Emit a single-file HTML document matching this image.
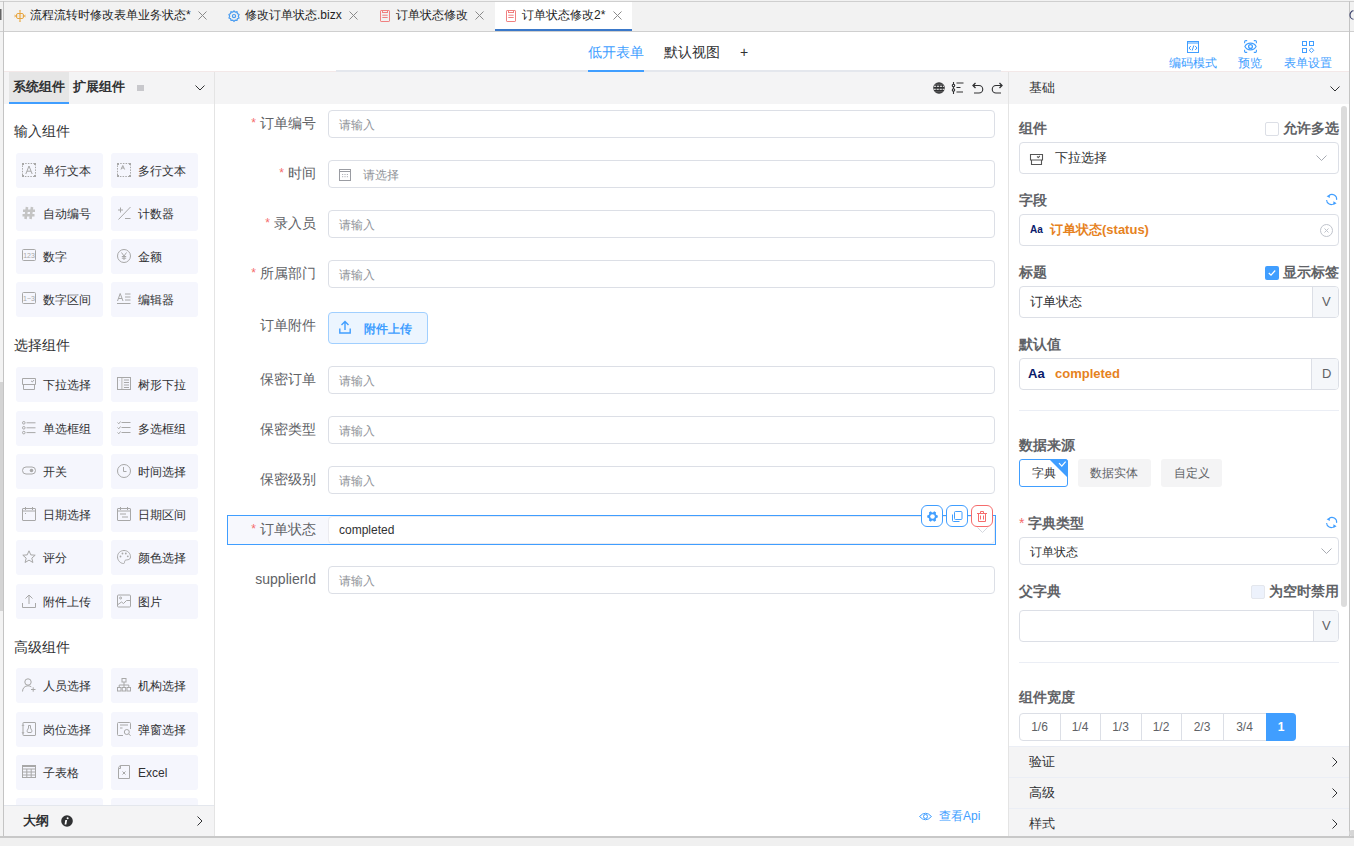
<!DOCTYPE html><html><head><meta charset="utf-8"><style>
*{box-sizing:border-box;margin:0;padding:0}
html,body{width:1354px;height:846px;overflow:hidden;background:#fff;font-family:"Liberation Sans",sans-serif;color:#303133}
.ab{position:absolute}
.t{position:absolute;white-space:nowrap;line-height:20px}
svg{position:absolute;overflow:visible}
.cb{position:absolute;width:87px;height:35px;border-radius:3px;background:#f5f6fd}
.cbt{position:absolute;left:27px;top:8px;font-size:12px;line-height:20px;color:#303133;white-space:nowrap}
.inp{position:absolute;left:328px;width:667px;height:28px;border:1px solid #dcdfe6;border-radius:4px;background:#fff}
.ph{position:absolute;left:10px;top:4px;font-size:12px;line-height:20px;color:#909399;white-space:nowrap}
.lbl{position:absolute;right:1038px;font-size:14px;line-height:20px;color:#606266;white-space:nowrap;text-align:right}
.req{color:#f56c6c;margin-right:4px;font-size:12px;position:relative;top:-1px}
.rb{position:absolute;left:1019px;width:320px;border:1px solid #dcdfe6;border-radius:4px;background:#fff}
.rl{position:absolute;left:1019px;font-size:14px;line-height:20px;font-weight:bold;color:#606266;white-space:nowrap}
</style></head><body>
<div class="ab" style="left:0;top:0;width:1354px;height:32px;background:#f2f2f2"></div>
<div class="ab" style="left:0;top:1px;width:1354px;height:1px;background:#cfcfcf"></div>
<div class="ab" style="left:0;top:31px;width:1354px;height:1px;background:#cfcfcf"></div>
<div class="ab" style="left:0;top:32px;width:3px;height:805px;background:#f3f3f3"></div>
<div class="ab" style="left:0;top:382px;width:3px;height:229px;background:#d4d4d4"></div>
<div class="ab" style="left:0;top:9px;width:1px;height:11px;background:#666"></div><div class="ab" style="left:1px;top:9px;width:1px;height:11px;background:#aaa"></div>
<div class="ab" style="left:3px;top:1px;width:1px;height:836px;background:#c4c4c4"></div>
<div class="ab" style="left:1349px;top:1px;width:1px;height:836px;background:#c4c4c4"></div>
<div class="ab" style="left:0;top:836px;width:1354px;height:1px;background:#c8c8c8"></div>
<div class="ab" style="left:0;top:837px;width:1354px;height:9px;background:#f0f0f0"></div>
<div class="ab" style="left:495px;top:2px;width:137px;height:29px;background:#fff"></div>
<div class="ab" style="left:495px;top:29px;width:137px;height:2px;background:#3a78c9"></div>
<div class="t" style="left:30px;top:5px;font-size:12px;color:#1f1f1f">流程流转时修改表单业务状态*</div>
<svg style="left:198px;top:11px" width="9" height="9" viewBox="0 0 9 9"><path d="M0.5 0.5L8.5 8.5M8.5 0.5L0.5 8.5" stroke="#8a8a8a" stroke-width="1"/></svg>
<div class="t" style="left:245px;top:5px;font-size:12px;color:#1f1f1f">修改订单状态.bizx</div>
<svg style="left:349px;top:11px" width="9" height="9" viewBox="0 0 9 9"><path d="M0.5 0.5L8.5 8.5M8.5 0.5L0.5 8.5" stroke="#8a8a8a" stroke-width="1"/></svg>
<div class="t" style="left:396px;top:5px;font-size:12px;color:#1f1f1f">订单状态修改</div>
<svg style="left:475px;top:11px" width="9" height="9" viewBox="0 0 9 9"><path d="M0.5 0.5L8.5 8.5M8.5 0.5L0.5 8.5" stroke="#8a8a8a" stroke-width="1"/></svg>
<div class="t" style="left:522px;top:5px;font-size:12px;color:#1f1f1f">订单状态修改2*</div>
<svg style="left:613px;top:11px" width="9" height="9" viewBox="0 0 9 9"><path d="M0.5 0.5L8.5 8.5M8.5 0.5L0.5 8.5" stroke="#8a8a8a" stroke-width="1"/></svg>
<svg style="left:14px;top:10px" width="12" height="12" viewBox="0 0 12 12"><g fill="none" stroke="#e8a640" stroke-width="1"><rect x="2.5" y="3.5" width="7" height="5" rx="1.5"/><path d="M6 1V3.5M6 8.5V11M5.2 4.8H6.8M5.2 7.2H6.8M6 4.8V7.2M0.5 5.2L1.8 6L0.5 6.8M11.5 5.2L10.2 6L11.5 6.8M4.2 6H3.6M8.4 6H7.8"/></g><path d="M4.8 0.2H7.2L6 1.6Z M4.8 11.8H7.2L6 10.4Z" fill="#e8a640"/></svg>
<svg style="left:228px;top:10px" width="12" height="12" viewBox="0 0 12 12"><g fill="none" stroke="#4a9cf0" stroke-width="1.2"><path d="M6 0.8L7.2 2.1L9 1.8L9.4 3.6L11 4.5L10.3 6.2L11 7.9L9.4 8.6L9 10.4L7.2 10.1L6 11.4L4.8 10.1L3 10.4L2.6 8.6L1 7.9L1.7 6.2L1 4.5L2.6 3.6L3 1.8L4.8 2.1Z"/><circle cx="6" cy="6.1" r="1.6"/></g></svg>
<svg style="left:380px;top:10px" width="10" height="12" viewBox="0 0 10 12"><g fill="none" stroke="#f08080" stroke-width="1"><rect x="0.5" y="0.5" width="9" height="11" rx="0.6"/><rect x="2.5" y="0.5" width="5" height="2"/><path d="M2.3 5.2H7.7M2.3 7.5H7.7"/></g></svg>
<svg style="left:506px;top:10px" width="10" height="12" viewBox="0 0 10 12"><g fill="none" stroke="#f08080" stroke-width="1"><rect x="0.5" y="0.5" width="9" height="11" rx="0.6"/><rect x="2.5" y="0.5" width="5" height="2"/><path d="M2.3 5.2H7.7M2.3 7.5H7.7"/></g></svg>
<div class="ab" style="left:4px;top:71px;width:1345px;height:1px;background:#f3e8e8"></div>
<div class="ab" style="left:336px;top:70px;width:665px;height:2px;background:#e4e7ed"></div>
<div class="t" style="left:588px;top:42px;font-size:14px;color:#409eff">低开表单</div>
<div class="ab" style="left:588px;top:70px;width:56px;height:2px;background:#409eff"></div>
<div class="t" style="left:664px;top:42px;font-size:14px;color:#303133">默认视图</div>
<div class="t" style="left:740px;top:42px;font-size:14px;color:#303133">+</div>
<div class="t" style="left:1169px;top:53px;font-size:12px;color:#409eff">编码模式</div>
<div class="t" style="left:1238px;top:53px;font-size:12px;color:#409eff">预览</div>
<div class="t" style="left:1284px;top:53px;font-size:12px;color:#409eff">表单设置</div>
<svg style="left:1187px;top:41px" width="12" height="12" viewBox="0 0 12 12"><g fill="none" stroke="#409eff" stroke-width="1"><rect x="0.5" y="0.5" width="11" height="11"/><path d="M0.5 2H11.5M3.8 5L2 7L3.8 9M8.2 5L10 7L8.2 9M6.8 4.5L5.2 9.5"/></g></svg>
<svg style="left:1244px;top:40px" width="13" height="13" viewBox="0 0 13 13"><g fill="none" stroke="#409eff" stroke-width="1.1"><path d="M0.6 3.2V1.8A1.2 1.2 0 0 1 1.8 0.6H3.2M9.8 0.6H11.2A1.2 1.2 0 0 1 12.4 1.8V3.2M12.4 9.8V11.2A1.2 1.2 0 0 1 11.2 12.4H9.8M3.2 12.4H1.8A1.2 1.2 0 0 1 0.6 11.2V9.8"/><path d="M0.9 6.5C3 2 10 2 12.1 6.5C10 11 3 11 0.9 6.5Z"/><circle cx="6.5" cy="6.5" r="1.9" stroke-width="1.3"/></g></svg>
<svg style="left:1302px;top:41px" width="12" height="12" viewBox="0 0 12 12"><g fill="none" stroke="#409eff" stroke-width="1"><rect x="0.5" y="0.5" width="4" height="4"/><rect x="7.5" y="0.5" width="4" height="4"/><rect x="0.5" y="7.5" width="4" height="4"/><path d="M9.5 7L11.8 9.3L9.5 11.6L7.2 9.3Z"/></g></svg>
<div class="ab" style="left:4px;top:72px;width:210px;height:32px;background:#f4f4f5"></div>
<div class="ab" style="left:9px;top:72px;width:60px;height:32px;background:#e6e6e6"></div>
<div class="ab" style="left:9px;top:102px;width:60px;height:2px;background:#409eff"></div>
<div class="ab" style="left:214px;top:72px;width:1px;height:765px;background:#e4e4e4"></div>
<div class="t" style="left:13px;top:77px;font-size:13px;font-weight:bold;color:#303133">系统组件</div>
<div class="t" style="left:73px;top:77px;font-size:13px;font-weight:bold;color:#303133">扩展组件</div>
<div class="ab" style="left:137px;top:85px;width:7px;height:6px;background:#c8c8cc"></div>
<svg style="left:195px;top:85px" width="10" height="6" viewBox="0 0 10 6"><path d="M0.5 0.5L5 5L9.5 0.5" fill="none" stroke="#303133" stroke-width="1"/></svg>
<div class="t" style="left:14px;top:121px;font-size:14px;color:#303133">输入组件</div>
<div class="t" style="left:14px;top:335px;font-size:14px;color:#303133">选择组件</div>
<div class="t" style="left:14px;top:637px;font-size:14px;color:#303133">高级组件</div>
<div class="ab" style="left:4px;top:104px;width:210px;height:701px;overflow:hidden">
<div class="cb" style="left:12px;top:49px"><svg style="left:6px;top:10px" width="14" height="14" viewBox="0 0 14 14"><g fill="none" stroke="#a8a8a8" stroke-width="1" stroke-dasharray="1.5 1.2"><rect x="0.5" y="0.5" width="13" height="13"/></g><g fill="#a8a8a8"><rect x="0" y="0" width="2" height="2"/><rect x="12" y="0" width="2" height="2"/><rect x="0" y="12" width="2" height="2"/><rect x="12" y="12" width="2" height="2"/></g><path d="M3.8 11L7 3L10.2 11M5 8.2H9" fill="none" stroke="#a8a8a8" stroke-width="1" stroke-width="1.1"/></svg><div class="cbt">单行文本</div></div>
<div class="cb" style="left:107px;top:49px"><svg style="left:6px;top:10px" width="14" height="14" viewBox="0 0 14 14"><g fill="none" stroke="#a8a8a8" stroke-width="1" stroke-dasharray="1.5 1.2"><rect x="0.5" y="0.5" width="13" height="13"/></g><g fill="#a8a8a8"><rect x="0" y="0" width="2" height="2"/><rect x="12" y="0" width="2" height="2"/><rect x="0" y="12" width="2" height="2"/><rect x="12" y="12" width="2" height="2"/></g><path d="M4 6.5L5.8 2.5L7.6 6.5M4.7 5H6.9" fill="none" stroke="#a8a8a8" stroke-width="1" stroke-width="0.8"/></svg><div class="cbt">多行文本</div></div>
<div class="cb" style="left:12px;top:92px"><svg style="left:6px;top:10px" width="14" height="14" viewBox="0 0 14 14"><path d="M5 1L3.5 13M10 1L8.5 13M1 4.8H13M0.5 9.2H12.5" fill="none" stroke="#c4c4c4" stroke-width="2.6"/></svg><div class="cbt">自动编号</div></div>
<div class="cb" style="left:107px;top:92px"><svg style="left:6px;top:10px" width="14" height="14" viewBox="0 0 14 14"><path d="M1 4H6M3.5 1.5V6.5M13.5 1L1.5 13.5M8 12.5H13.5" fill="none" stroke="#a8a8a8" stroke-width="1" stroke-width="1.4"/></svg><div class="cbt">计数器</div></div>
<div class="cb" style="left:12px;top:135px"><svg style="left:6px;top:10px" width="14" height="14" viewBox="0 0 14 14"><rect x="0.5" y="0.5" width="13" height="11" rx="1" fill="none" stroke="#a8a8a8" stroke-width="1"/><text x="7" y="9" font-size="7" font-family="Liberation Sans" fill="#a8a8a8" text-anchor="middle">123</text></svg><div class="cbt">数字</div></div>
<div class="cb" style="left:107px;top:135px"><svg style="left:6px;top:10px" width="14" height="14" viewBox="0 0 14 14"><circle cx="7" cy="7" r="6.5" fill="none" stroke="#a8a8a8" stroke-width="1"/><path d="M4.5 3.5L7 7L9.5 3.5M7 7V11M4.8 7.5H9.2M4.8 9.2H9.2" fill="none" stroke="#a8a8a8" stroke-width="1"/></svg><div class="cbt">金额</div></div>
<div class="cb" style="left:12px;top:178px"><svg style="left:6px;top:10px" width="14" height="14" viewBox="0 0 14 14"><rect x="0.5" y="0.5" width="13" height="11" rx="1" fill="none" stroke="#a8a8a8" stroke-width="1"/><text x="7" y="9" font-size="7" font-family="Liberation Sans" fill="#a8a8a8" text-anchor="middle">1~3</text></svg><div class="cbt">数字区间</div></div>
<div class="cb" style="left:107px;top:178px"><svg style="left:6px;top:10px" width="14" height="14" viewBox="0 0 14 14"><path d="M0.5 9L3.2 1.5L6 9M1.5 6.5H5M8 2H13.5M8 5H13.5M8 8H13.5M0 11.5H13.5" fill="none" stroke="#a8a8a8" stroke-width="1"/></svg><div class="cbt">编辑器</div></div>
<div class="cb" style="left:12px;top:263px"><svg style="left:6px;top:10px" width="14" height="14" viewBox="0 0 14 14"><path d="M0.5 7.5V1.5H13.5V7.5ZM1.5 8V12.5H12.5V8M9 3.8L10.3 5L12 3" fill="none" stroke="#a8a8a8" stroke-width="1"/></svg><div class="cbt">下拉选择</div></div>
<div class="cb" style="left:107px;top:263px"><svg style="left:6px;top:10px" width="14" height="14" viewBox="0 0 14 14"><rect x="0.5" y="0.5" width="13" height="12" fill="none" stroke="#a8a8a8" stroke-width="1"/><path d="M5 0.5V12.5M7 3H12M7 5.5H12M7 8H12M7 10.5H12M2.5 3V3.2" fill="none" stroke="#a8a8a8" stroke-width="1"/><rect x="5" y="1" width="1.2" height="11" fill="#ddd"/></svg><div class="cbt">树形下拉</div></div>
<div class="cb" style="left:12px;top:307px"><svg style="left:6px;top:10px" width="14" height="14" viewBox="0 0 14 14"><circle cx="1.8" cy="1.8" r="1.3" fill="none" stroke="#a8a8a8" stroke-width="1"/><circle cx="1.8" cy="6.8" r="1.3" fill="none" stroke="#a8a8a8" stroke-width="1"/><circle cx="1.8" cy="11.6" r="1.3" fill="none" stroke="#a8a8a8" stroke-width="1"/><path d="M4.5 1.8H13.5M4.5 6.8H13.5M4.5 11.6H13.5" fill="none" stroke="#a8a8a8" stroke-width="1" stroke-width="1.2"/></svg><div class="cbt">单选框组</div></div>
<div class="cb" style="left:107px;top:307px"><svg style="left:6px;top:10px" width="14" height="14" viewBox="0 0 14 14"><path d="M0.5 1.5L1.8 2.8L3.5 0.5M0.5 6.5L1.8 7.8L3.5 5.5M0.5 11.5L1.8 12.8L3.5 10.5M4.5 1.5H13.5M4.5 6.5H13.5M4.5 11.5H13.5" fill="none" stroke="#a8a8a8" stroke-width="1" stroke-width="1.1"/></svg><div class="cbt">多选框组</div></div>
<div class="cb" style="left:12px;top:350px"><svg style="left:6px;top:10px" width="14" height="14" viewBox="0 0 14 14"><rect x="0.5" y="3" width="13" height="7" rx="3.5" fill="none" stroke="#a8a8a8" stroke-width="1"/><circle cx="9.5" cy="6.5" r="1.8" fill="#a8a8a8"/></svg><div class="cbt">开关</div></div>
<div class="cb" style="left:107px;top:350px"><svg style="left:6px;top:10px" width="14" height="14" viewBox="0 0 14 14"><circle cx="7" cy="7" r="6.5" fill="none" stroke="#a8a8a8" stroke-width="1"/><path d="M6.5 3V7.5H9.5" fill="none" stroke="#a8a8a8" stroke-width="1"/></svg><div class="cbt">时间选择</div></div>
<div class="cb" style="left:12px;top:393px"><svg style="left:6px;top:10px" width="14" height="14" viewBox="0 0 14 14"><rect x="0.5" y="1.5" width="13" height="12" rx="0.5" fill="none" stroke="#a8a8a8" stroke-width="1"/><path d="M0.5 4H13.5M3.5 0V3M10.5 0V3" fill="none" stroke="#a8a8a8" stroke-width="1"/><rect x="3" y="6" width="1" height="1" fill="#a8a8a8"/></svg><div class="cbt">日期选择</div></div>
<div class="cb" style="left:107px;top:393px"><svg style="left:6px;top:10px" width="14" height="14" viewBox="0 0 14 14"><rect x="0.5" y="1.5" width="13" height="12" rx="0.5" fill="none" stroke="#a8a8a8" stroke-width="1"/><path d="M0.5 4H13.5M3.5 0V3M10.5 0V3M3 7H9M5 10H11" fill="none" stroke="#a8a8a8" stroke-width="1"/></svg><div class="cbt">日期区间</div></div>
<div class="cb" style="left:12px;top:436px"><svg style="left:6px;top:10px" width="14" height="14" viewBox="0 0 14 14"><path d="M7 0.8L8.8 4.9L13.2 5.2L9.8 8.1L10.9 12.5L7 10.1L3.1 12.5L4.2 8.1L0.8 5.2L5.2 4.9Z" fill="none" stroke="#a8a8a8" stroke-width="1"/></svg><div class="cbt">评分</div></div>
<div class="cb" style="left:107px;top:436px"><svg style="left:6px;top:10px" width="14" height="14" viewBox="0 0 14 14"><path d="M7 0.5C3.3 0.5 0.5 3.3 0.5 6.8C0.5 10.5 3.5 13.5 6.5 13.5C8 13.5 7.2 11.5 8 10.5C9 9.3 13.5 10.8 13.5 6.8C13.5 3.3 10.7 0.5 7 0.5Z" fill="none" stroke="#a8a8a8" stroke-width="1"/><g fill="#a8a8a8"><circle cx="3.5" cy="6.5" r="0.9"/><circle cx="5.5" cy="3.5" r="0.9"/><circle cx="8.8" cy="3.5" r="0.9"/><circle cx="10.8" cy="6.3" r="0.9"/></g></svg><div class="cbt">颜色选择</div></div>
<div class="cb" style="left:12px;top:480px"><svg style="left:6px;top:10px" width="14" height="14" viewBox="0 0 14 14"><path d="M7 10V1M3.5 4.5L7 1L10.5 4.5M0.5 9V13.5H13.5V9" fill="none" stroke="#a8a8a8" stroke-width="1" stroke-width="1.2"/></svg><div class="cbt">附件上传</div></div>
<div class="cb" style="left:107px;top:480px"><svg style="left:6px;top:10px" width="14" height="14" viewBox="0 0 14 14"><rect x="0.5" y="1" width="13" height="12" rx="1" fill="none" stroke="#a8a8a8" stroke-width="1"/><circle cx="3.6" cy="4" r="1" fill="none" stroke="#a8a8a8" stroke-width="1"/><path d="M1 10.5L4.5 8L6.5 9.5L9.5 6.5H13.5" fill="none" stroke="#a8a8a8" stroke-width="1"/></svg><div class="cbt">图片</div></div>
<div class="cb" style="left:12px;top:564px"><svg style="left:6px;top:10px" width="14" height="14" viewBox="0 0 14 14"><circle cx="6" cy="4" r="3.2" fill="none" stroke="#a8a8a8" stroke-width="1"/><path d="M0.5 13.5C0.5 10 3 7.8 6 7.8C7.5 7.8 8.5 8.2 9.3 8.8M9 11.5H13.5M11.2 9.3V13.7" fill="none" stroke="#a8a8a8" stroke-width="1"/></svg><div class="cbt">人员选择</div></div>
<div class="cb" style="left:107px;top:564px"><svg style="left:6px;top:10px" width="14" height="14" viewBox="0 0 14 14"><rect x="5" y="0.5" width="4" height="3.5" fill="none" stroke="#a8a8a8" stroke-width="1"/><rect x="0.5" y="9.5" width="3.5" height="3.5" fill="none" stroke="#a8a8a8" stroke-width="1"/><rect x="5.2" y="9.5" width="3.5" height="3.5" fill="none" stroke="#a8a8a8" stroke-width="1"/><rect x="10" y="9.5" width="3.5" height="3.5" fill="none" stroke="#a8a8a8" stroke-width="1"/><path d="M7 4V9.5M2.2 9.5V7H11.8V9.5" fill="none" stroke="#a8a8a8" stroke-width="1"/></svg><div class="cbt">机构选择</div></div>
<div class="cb" style="left:12px;top:608px"><svg style="left:6px;top:10px" width="14" height="14" viewBox="0 0 14 14"><path d="M1 2.5V1A0.5 0.5 0 0 1 1.5 0.5H13A0.5 0.5 0 0 1 13.5 1V13A0.5 0.5 0 0 1 13 13.5H1.5A0.5 0.5 0 0 1 1 13V11M0 4L1 2.5L2 4M0 10L1 11.5L2 10M1 4V10" fill="none" stroke="#a8a8a8" stroke-width="1"/><path d="M6.5 3.5H8.5V6L9.8 8.5A1.5 1.5 0 0 1 9 10.5H6A1.5 1.5 0 0 1 5.2 8.5L6.5 6Z" fill="none" stroke="#a8a8a8" stroke-width="1"/></svg><div class="cbt">岗位选择</div></div>
<div class="cb" style="left:107px;top:608px"><svg style="left:6px;top:10px" width="14" height="14" viewBox="0 0 14 14"><path d="M13.5 7V1.5A1 1 0 0 0 12.5 0.5H1.5A1 1 0 0 0 0.5 1.5V12.5A1 1 0 0 0 1.5 13.5H6M3 3H11M3 6H5.5" fill="none" stroke="#a8a8a8" stroke-width="1"/><circle cx="9.8" cy="10" r="2.5" fill="none" stroke="#a8a8a8" stroke-width="1"/><path d="M11.6 11.8L13.6 13.8" fill="none" stroke="#a8a8a8" stroke-width="1"/></svg><div class="cbt">弹窗选择</div></div>
<div class="cb" style="left:12px;top:651px"><svg style="left:6px;top:10px" width="14" height="14" viewBox="0 0 14 14"><rect x="0.5" y="0.5" width="13" height="12" fill="none" stroke="#a8a8a8" stroke-width="1"/><path d="M0.5 4H13.5M0.5 7H13.5M0.5 10H13.5M4.8 4V12.5M9.2 4V12.5M0.5 1.5H13.5" fill="none" stroke="#a8a8a8" stroke-width="1"/></svg><div class="cbt">子表格</div></div>
<div class="cb" style="left:107px;top:651px"><svg style="left:6px;top:10px" width="14" height="14" viewBox="0 0 14 14"><path d="M4 0.5H12.5V13.5H1.5V3.5M1.5 3.5C1.5 2 2.5 0.5 4 0.5M1.5 3.5H3.5V0.8" fill="none" stroke="#a8a8a8" stroke-width="1"/><path d="M5.5 6.5L8.5 9.5M8.5 6.5L5.5 9.5" fill="none" stroke="#a8a8a8" stroke-width="1"/></svg><div class="cbt">Excel</div></div>
<div class="cb" style="left:12px;top:694px"><div class="cbt"></div></div>
<div class="cb" style="left:107px;top:694px"><div class="cbt"></div></div>
</div>
<div class="ab" style="left:4px;top:805px;width:210px;height:31px;background:#f4f4f5;border-top:1px solid #e4e7ed"></div>
<div class="t" style="left:23px;top:811px;font-size:13px;font-weight:bold;color:#303133">大纲</div>
<svg style="left:61px;top:815px" width="12" height="12" viewBox="0 0 12 12"><circle cx="6" cy="6" r="5.8" fill="#303133"/><rect x="5.2" y="5" width="1.8" height="4.5" fill="#fff" transform="skewX(-10)"/><circle cx="6.6" cy="3.2" r="1" fill="#fff"/></svg>
<svg style="left:197px;top:816px" width="6" height="10" viewBox="0 0 6 10"><path d="M0.5 0.5L5 5L0.5 9.5" fill="none" stroke="#303133" stroke-width="1"/></svg>
<div class="ab" style="left:215px;top:72px;width:793px;height:32px;background:#f4f4f5"></div>
<div class="ab" style="left:1008px;top:72px;width:1px;height:765px;background:#e4e4e4"></div>
<div class="inp" style="top:110px"><div class="ph" style="left:10px">请输入</div></div>
<div class="t" style="left:0;width:316px;text-align:right;top:113px;font-size:14px;color:#606266"><span class="req">*</span>订单编号</div>
<div class="inp" style="top:160px"><div class="ph" style="left:34px">请选择</div></div>
<svg style="left:339px;top:169px" width="12" height="12" viewBox="0 0 12 12"><g fill="none" stroke="#9a9ca2" stroke-width="1"><rect x="0.5" y="0.5" width="11" height="11"/><path d="M0.5 2.5H11.5"/></g><g fill="#b0b2b8"><rect x="3" y="5" width="1.2" height="1"/><rect x="5.4" y="5" width="1.2" height="1"/><rect x="7.8" y="5" width="1.2" height="1"/><rect x="3" y="7.2" width="1.2" height="1"/><rect x="5.4" y="7.2" width="1.2" height="1"/><rect x="7.8" y="7.2" width="1.2" height="1"/></g></svg>
<div class="t" style="left:0;width:316px;text-align:right;top:163px;font-size:14px;color:#606266"><span class="req">*</span>时间</div>
<div class="inp" style="top:210px"><div class="ph" style="left:10px">请输入</div></div>
<div class="t" style="left:0;width:316px;text-align:right;top:213px;font-size:14px;color:#606266"><span class="req">*</span>录入员</div>
<div class="inp" style="top:260px"><div class="ph" style="left:10px">请输入</div></div>
<div class="t" style="left:0;width:316px;text-align:right;top:263px;font-size:14px;color:#606266"><span class="req">*</span>所属部门</div>
<div class="ab" style="left:328px;top:312px;width:100px;height:32px;border:1px solid #a0cfff;border-radius:4px;background:#ecf5ff"><div class="t" style="left:35px;top:6px;font-size:12px;font-weight:bold;color:#409eff">附件上传</div></div>
<svg style="left:339px;top:320px" width="12" height="14" viewBox="0 0 12 14"><g fill="none" stroke="#409eff" stroke-width="1.4"><path d="M6 10V1.5M2.5 5L6 1.5L9.5 5M0.8 8.5V13H11.2V8.5"/></g></svg>
<div class="t" style="left:0;width:316px;text-align:right;top:315px;font-size:14px;color:#606266">订单附件</div>
<div class="inp" style="top:366px"><div class="ph" style="left:10px">请输入</div></div>
<div class="t" style="left:0;width:316px;text-align:right;top:369px;font-size:14px;color:#606266">保密订单</div>
<div class="inp" style="top:416px"><div class="ph" style="left:10px">请输入</div></div>
<div class="t" style="left:0;width:316px;text-align:right;top:419px;font-size:14px;color:#606266">保密类型</div>
<div class="inp" style="top:466px"><div class="ph" style="left:10px">请输入</div></div>
<div class="t" style="left:0;width:316px;text-align:right;top:469px;font-size:14px;color:#606266">保密级别</div>
<div class="ab" style="left:227px;top:515px;width:769px;height:30px;border:1px solid #409eff;background:#f7f8fd"></div>
<div class="ab" style="left:328px;top:516px;width:667px;height:28px;border-radius:4px;background:#fff;border:1px solid #ebebf0"><div class="ph" style="top:3px;color:#303133">completed</div></div>
<div class="t" style="left:0;width:316px;text-align:right;top:519px;font-size:14px;color:#606266"><span class="req">*</span>订单状态</div>
<div class="inp" style="top:566px"><div class="ph" style="left:10px">请输入</div></div>
<div class="t" style="left:0;width:316px;text-align:right;top:569px;font-size:14px;color:#606266">supplierId</div>
<div class="ab" style="left:921px;top:505px;width:22px;height:22px;border:1px solid #409eff;border-radius:6px;background:#fff"></div>
<div class="ab" style="left:946px;top:505px;width:22px;height:22px;border:1px solid #409eff;border-radius:6px;background:#fff"></div>
<div class="ab" style="left:971px;top:505px;width:22px;height:22px;border:1px solid #f56c6c;border-radius:6px;background:#fff"></div>
<div class="t" style="left:939px;top:806px;font-size:12px;color:#409eff">查看Api</div>
<svg style="left:919px;top:812px" width="13" height="9" viewBox="0 0 13 9"><g fill="none" stroke="#409eff" stroke-width="1"><path d="M0.5 4.5Q6.5 -2 12.5 4.5Q6.5 11 0.5 4.5Z"/><circle cx="6.5" cy="4.5" r="2"/></g></svg>
<div class="ab" style="left:1009px;top:72px;width:340px;height:32px;background:#f4f4f5"></div>
<div class="t" style="left:1029px;top:78px;font-size:13px;color:#303133">基础</div>
<svg style="left:1330px;top:86px" width="10" height="6" viewBox="0 0 10 6"><path d="M0.5 0.5L5 5L9.5 0.5" fill="none" stroke="#303133" stroke-width="1"/></svg>
<div class="ab" style="left:1341px;top:106px;width:6px;height:501px;border-radius:3px;background:#dcdcdc"></div>
<div class="rl" style="top:118px">组件</div>
<div class="rl" style="top:190px">字段</div>
<div class="rl" style="top:262px">标题</div>
<div class="rl" style="top:334px">默认值</div>
<div class="rl" style="top:435px">数据来源</div>
<div class="rl" style="top:581px">父字典</div>
<div class="rl" style="top:687px">组件宽度</div>
<div class="rl" style="top:513px"><span style="color:#f56c6c;font-weight:normal;margin-right:4px">*</span>字典类型</div>
<div class="rb" style="top:142px;height:32px"><div class="t" style="left:35px;top:5px;font-size:13px;color:#303133">下拉选择</div></div>
<div class="rb" style="top:214px;height:32px"><div class="t" style="left:30px;top:5px;font-size:13px;font-weight:bold;color:#e6821e">订单状态(status)</div></div>
<div class="rb" style="top:286px;height:32px;overflow:hidden"><div class="t" style="left:10px;top:5px;font-size:13px;color:#303133">订单状态</div><div class="ab" style="right:0;top:0;width:26px;height:30px;background:#f5f7fa;border-left:1px solid #dcdfe6"></div><div class="t" style="left:302px;top:5px;font-size:13px;color:#606266">V</div></div>
<div class="rb" style="top:358px;height:32px;overflow:hidden"><div class="t" style="left:35px;top:5px;font-size:13px;font-weight:bold;color:#e6821e">completed</div><div class="ab" style="right:0;top:0;width:27px;height:30px;background:#f5f7fa;border-left:1px solid #dcdfe6"></div><div class="t" style="left:302px;top:5px;font-size:13px;color:#606266">D</div></div>
<div class="ab" style="left:1019px;top:410px;width:320px;height:1px;background:#ebeef5"></div>
<div class="rb" style="top:537px;height:28px"><div class="t" style="left:10px;top:4px;font-size:12px;color:#303133">订单状态</div></div>
<div class="rb" style="top:610px;height:32px;overflow:hidden"><div class="ab" style="right:0;top:0;width:25px;height:30px;background:#f5f7fa;border-left:1px solid #dcdfe6"></div><div class="t" style="left:302px;top:5px;font-size:13px;color:#606266">V</div></div>
<div class="ab" style="left:1019px;top:662px;width:320px;height:1px;background:#ebeef5"></div>
<div class="ab" style="left:1019px;top:459px;width:49px;height:28px;border:1px solid #409eff;border-radius:3px;background:#fff;overflow:hidden"><div class="t" style="left:12px;top:3px;font-size:12px;color:#303133">字典</div></div>
<div class="ab" style="left:1078px;top:459px;width:73px;height:28px;border-radius:3px;background:#f4f4f5"><div class="t" style="left:12px;top:4px;font-size:12px;color:#606266">数据实体</div></div>
<div class="ab" style="left:1161px;top:459px;width:61px;height:28px;border-radius:3px;background:#f4f4f5"><div class="t" style="left:13px;top:4px;font-size:12px;color:#606266">自定义</div></div>
<div class="ab" style="left:1019px;top:713px;width:277px;height:28px;border:1px solid #dcdfe6;border-radius:4px;background:#fff"></div>
<div class="ab" style="left:1060px;top:714px;width:1px;height:26px;background:#dcdfe6"></div>
<div class="ab" style="left:1100px;top:714px;width:1px;height:26px;background:#dcdfe6"></div>
<div class="ab" style="left:1141px;top:714px;width:1px;height:26px;background:#dcdfe6"></div>
<div class="ab" style="left:1181px;top:714px;width:1px;height:26px;background:#dcdfe6"></div>
<div class="ab" style="left:1223px;top:714px;width:1px;height:26px;background:#dcdfe6"></div>
<div class="t" style="left:1019px;width:41px;text-align:center;top:717px;font-size:12px;color:#606266">1/6</div>
<div class="t" style="left:1060px;width:40px;text-align:center;top:717px;font-size:12px;color:#606266">1/4</div>
<div class="t" style="left:1100px;width:41px;text-align:center;top:717px;font-size:12px;color:#606266">1/3</div>
<div class="t" style="left:1141px;width:40px;text-align:center;top:717px;font-size:12px;color:#606266">1/2</div>
<div class="t" style="left:1181px;width:42px;text-align:center;top:717px;font-size:12px;color:#606266">2/3</div>
<div class="t" style="left:1223px;width:43px;text-align:center;top:717px;font-size:12px;color:#606266">3/4</div>
<div class="ab" style="left:1266px;top:713px;width:30px;height:28px;background:#409eff;border-radius:0 4px 4px 0"></div>
<div class="t" style="left:1266px;width:30px;text-align:center;top:717px;font-size:12px;font-weight:bold;color:#fff">1</div>
<div class="ab" style="left:1009px;top:746px;width:340px;height:31px;background:#f4f4f5;border-top:1px solid #ebeef5"></div>
<div class="t" style="left:1029px;top:752px;font-size:13px;color:#303133">验证</div>
<svg style="left:1332px;top:757px" width="6" height="10" viewBox="0 0 6 10"><path d="M0.5 0.5L5 5L0.5 9.5" fill="none" stroke="#303133" stroke-width="1"/></svg>
<div class="ab" style="left:1009px;top:777px;width:340px;height:31px;background:#f4f4f5;border-top:1px solid #ebeef5"></div>
<div class="t" style="left:1029px;top:783px;font-size:13px;color:#303133">高级</div>
<svg style="left:1332px;top:788px" width="6" height="10" viewBox="0 0 6 10"><path d="M0.5 0.5L5 5L0.5 9.5" fill="none" stroke="#303133" stroke-width="1"/></svg>
<div class="ab" style="left:1009px;top:808px;width:340px;height:28px;background:#f4f4f5;border-top:1px solid #ebeef5"></div>
<div class="t" style="left:1029px;top:814px;font-size:13px;color:#303133">样式</div>
<svg style="left:1332px;top:819px" width="6" height="10" viewBox="0 0 6 10"><path d="M0.5 0.5L5 5L0.5 9.5" fill="none" stroke="#303133" stroke-width="1"/></svg>
<svg style="left:933px;top:82px" width="12" height="12" viewBox="0 0 12 12"><circle cx="6" cy="6" r="5.8" fill="#303133"/><path d="M1 4.3H11M0.6 7.3H11.4" stroke="#fff" stroke-width="1.1" stroke-dasharray="2.2 0.8"/><path d="M2 2.2H10M2 9.8H10" stroke="#888" stroke-width="0.6"/></svg>
<svg style="left:952px;top:82px" width="12" height="12" viewBox="0 0 12 12"><g fill="none" stroke="#303133" stroke-width="1.1"><path d="M1.5 0V12M4.5 1H11.5M4.5 5.5H8.5M4.5 10H11"/><circle cx="1.5" cy="3.5" r="1.2" fill="#f4f4f5"/><circle cx="1.5" cy="8" r="1.2" fill="#f4f4f5"/></g></svg>
<svg style="left:972px;top:82px" width="12" height="12" viewBox="0 0 12 12"><g fill="none" stroke="#303133" stroke-width="1.1"><path d="M1.5 3.5H7A3.7 3.7 0 0 1 7 11H2"/><path d="M3.5 1L1 3.5L3.5 6" stroke-width="1.3"/></g></svg>
<svg style="left:991px;top:82px" width="12" height="12" viewBox="0 0 12 12"><g fill="none" stroke="#303133" stroke-width="1.1"><path d="M10.5 3.5H5A3.7 3.7 0 0 0 5 11H10"/><path d="M8.5 1L11 3.5L8.5 6" stroke-width="1.3"/></g></svg>
<svg style="left:927px;top:511px" width="11" height="11" viewBox="0 0 11 11"><path d="M9.30 3.96 L10.78 4.38 L10.78 6.62 L9.30 7.04 L9.05 7.55 L8.73 8.02 L9.11 9.51 L7.17 10.64 L6.07 9.56 L5.50 9.60 L4.93 9.56 L3.83 10.64 L1.89 9.51 L2.27 8.02 L1.95 7.55 L1.70 7.04 L0.22 6.62 L0.22 4.38 L1.70 3.96 L1.95 3.45 L2.27 2.98 L1.89 1.49 L3.83 0.36 L4.93 1.44 L5.50 1.40 L6.07 1.44 L7.17 0.36 L9.11 1.49 L8.73 2.98 L9.05 3.45Z" fill="#409eff"/><circle cx="5.5" cy="5.5" r="2.3" fill="#fff"/></svg>
<svg style="left:952px;top:511px" width="11" height="11" viewBox="0 0 11 11"><g fill="none" stroke="#409eff" stroke-width="1"><rect x="2.5" y="0.5" width="7.5" height="8" rx="1"/><path d="M0.5 3.5V9.5A1 1 0 0 0 1.5 10.5H7.5"/></g></svg>
<svg style="left:977px;top:511px" width="10" height="11" viewBox="0 0 10 11"><g fill="none" stroke="#f56c6c" stroke-width="1"><path d="M0 2.5H10M3.5 2.5V0.5H6.5V2.5M1.5 2.5V10.5H8.5V2.5M3.5 4.5V8.5M6.5 4.5V8.5"/></g></svg>
<svg style="left:977px;top:527px" width="11" height="6" viewBox="0 0 11 6"><path d="M0.5 0.5L5.5 5.5L10.5 0.5" fill="none" stroke="#d4d7de" stroke-width="1"/></svg>
<svg style="left:1030px;top:154px" width="13" height="11" viewBox="0 0 13 11"><g fill="none" stroke="#555" stroke-width="1.1"><path d="M0.5 6V0.5H12.5V6ZM1.5 6V10.5H11.5V6M7 2.5L8.3 3.6L9.8 2"/></g></svg>
<svg style="left:1316px;top:155px" width="11" height="6" viewBox="0 0 11 6"><path d="M0.5 0.5L5.5 5.5L10.5 0.5" fill="none" stroke="#a8abb2" stroke-width="1"/></svg>
<svg style="left:1321px;top:548px" width="11" height="6" viewBox="0 0 11 6"><path d="M0.5 0.5L5.5 5.5L10.5 0.5" fill="none" stroke="#a8abb2" stroke-width="1"/></svg>
<svg style="left:1326px;top:194px" width="11" height="11" viewBox="0 0 11 11"><g fill="none" stroke="#409eff" stroke-width="1.1"><path d="M3 1.6A4.6 4.6 0 0 1 10.6 5.8M0.6 6A4.6 4.6 0 0 0 8 9.6"/></g><path d="M0.6 2.2L3.8 0.4V3.9Z M10.6 9.2L7.4 7.3V10.9Z" fill="#409eff"/></svg>
<svg style="left:1326px;top:517px" width="11" height="11" viewBox="0 0 11 11"><g fill="none" stroke="#409eff" stroke-width="1.1"><path d="M3 1.6A4.6 4.6 0 0 1 10.6 5.8M0.6 6A4.6 4.6 0 0 0 8 9.6"/></g><path d="M0.6 2.2L3.8 0.4V3.9Z M10.6 9.2L7.4 7.3V10.9Z" fill="#409eff"/></svg>
<div class="t" style="left:1030px;top:220px;font-size:10px;font-weight:bold;color:#0a1a6b;line-height:20px">Aa</div>
<div class="t" style="left:1028px;top:364px;font-size:13px;font-weight:bold;color:#0a1a6b;line-height:20px">Aa</div>
<svg style="left:1320px;top:224px" width="13" height="13" viewBox="0 0 13 13"><circle cx="6.5" cy="6.5" r="6" fill="none" stroke="#c0c4cc" stroke-width="1"/><path d="M4.5 4.5L8.5 8.5M8.5 4.5L4.5 8.5" stroke="#c0c4cc" stroke-width="1"/></svg>
<div class="ab" style="left:1265px;top:122px;width:14px;height:14px;border:1px solid #dcdfe6;border-radius:2px;background:#fff"></div>
<div class="rl" style="left:1283px;top:118px">允许多选</div>
<div class="ab" style="left:1265px;top:266px;width:14px;height:14px;border-radius:2px;background:#409eff"></div>
<svg style="left:1268px;top:269px" width="8" height="8" viewBox="0 0 8 8"><path d="M0.8 4L3 6.2L7.2 1.5" fill="none" stroke="#fff" stroke-width="1.2"/></svg>
<div class="rl" style="left:1283px;top:262px">显示标签</div>
<div class="ab" style="left:1251px;top:585px;width:14px;height:14px;border:1px solid #e4e7ed;border-radius:2px;background:#edf2fc"></div>
<div class="rl" style="left:1269px;top:581px">为空时禁用</div>
<svg style="left:1049px;top:459px" width="19" height="19" viewBox="0 0 19 19"><path d="M0 0H16A3 3 0 0 1 19 3V19Z" fill="#409eff"/><path d="M10 4.2L12.8 7.2L16.6 2.6" fill="none" stroke="#fff" stroke-width="1.2"/></svg>
<div class="ab" style="left:1349px;top:830px;width:5px;height:6px;border-radius:3px 0 0 3px;background:#d6d6d6"></div>
<div class="ab" style="left:1350px;top:32px;width:4px;height:798px;background:#fff"></div>
<svg style="left:1350px;top:10px" width="4" height="10" viewBox="0 0 4 10"><path d="M3.5 0.8A3.5 4.2 0 0 0 3.5 9.2" fill="none" stroke="#333a66" stroke-width="1.1"/></svg>
<div class="ab" style="left:0;top:836px;width:1354px;height:2px;background:#c8c8c8"></div>
<div class="ab" style="left:0;top:838px;width:1354px;height:8px;background:#f0f0f0"></div>
</body></html>
